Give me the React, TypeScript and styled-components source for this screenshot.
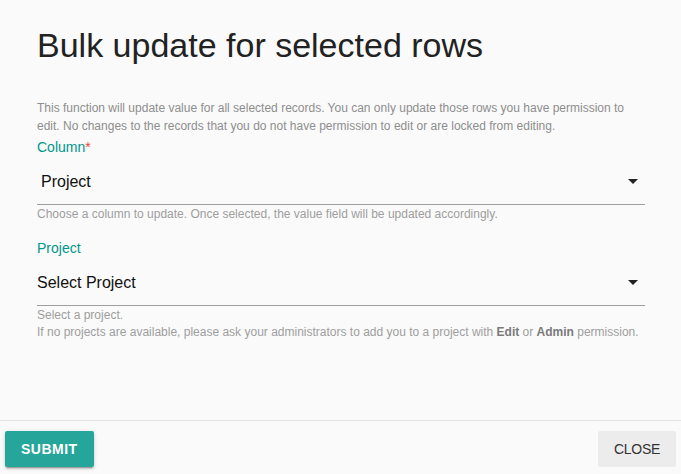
import * as React from 'react'
import styled, { createGlobalStyle } from 'styled-components'

const GlobalStyle = createGlobalStyle`
    html, body {
        margin: 0;
        padding: 0;
        background: #fafafa;
    }
    body {
        font-family: "Liberation Sans", Arial, Helvetica, sans-serif;
        color: #212121;
    }
    *, *::before, *::after {
        box-sizing: border-box;
    }
`;

const Modal = styled.div`
    width: 681px;
    height: 474px;
    display: flex;
    flex-direction: column;
    background: #fafafa;
`;

const Content = styled.div`
    flex: 1;
    padding: 25px 36px 0 37px;
`;

const Title = styled.h4`
    margin: 0 0 34px;
    font-size: 34px;
    line-height: 40px;
    font-weight: 400;
    color: #222;
`;

const Description = styled.p`
    margin: 0 0 3px;
    font-size: 12px;
    line-height: 18px;
    color: #8e8e8e;
`;

const Label = styled.div`
    font-size: 14px;
    line-height: 19px;
    color: #00968a;
`;

const Required = styled.span`
    color: #f44336;
`;

const Select = styled.div<{ $indent?: number }>`
    height: 48px;
    display: flex;
    align-items: center;
    justify-content: space-between;
    padding: 2px 7px 0 ${p => p.$indent || 0}px;
    border-bottom: 1px solid #9e9e9e;
    font-size: 16px;
    color: #111;
    cursor: pointer;
`;

const Helper = styled.div`
    margin-top: 1px;
    font-size: 12px;
    line-height: 17px;
    color: #9e9e9e;

    b {
        color: #7a7a7a;
    }
`;

const Field = styled.div<{ $gap?: number }>`
    margin-top: ${p => p.$gap || 0}px;
`;

const Footer = styled.div`
    height: 54px;
    border-top: 1px solid #e2e2e2;
    padding: 10px 5px 0;
    display: flex;
    justify-content: space-between;
    align-items: flex-start;
`;

const Button = styled.button<{ $primary?: boolean }>`
    height: 36px;
    padding: 0 16px;
    border: none;
    border-radius: 2px;
    font-family: inherit;
    font-size: 14px;
    text-transform: uppercase;
    cursor: pointer;
    background: ${p => p.$primary ? '#26a69a' : '#ececec'};
    color: ${p => p.$primary ? '#fff' : '#333'};
    font-weight: ${p => p.$primary ? 700 : 400};
    letter-spacing: ${p => p.$primary ? '0.5px' : '-0.3px'};
    box-shadow: ${p => p.$primary
        ? '0 2px 2px 0 rgba(0,0,0,0.14), 0 1px 5px 0 rgba(0,0,0,0.12), 0 3px 1px -2px rgba(0,0,0,0.2)'
        : 'none'};
`;

const Caret = () => (
    <svg width="10" height="5" viewBox="0 0 10 5">
        <path d="M0 0 L10 0 L5 5 Z" fill="#222" />
    </svg>
)

const App: React.FC = () => {
    return (
        <>
            <GlobalStyle />
            <Modal>
                <Content>
                    <Title>Bulk update for selected rows</Title>
                    <Description>
                        This function will update value for all selected records. You can only update those rows you have permission to edit. No changes to the records that you do not have permission to edit or are locked from editing.
                    </Description>
                    <Field>
                        <Label>Column<Required>*</Required></Label>
                        <Select $indent={4}>
                            <span>Project</span>
                            <Caret />
                        </Select>
                        <Helper>Choose a column to update. Once selected, the value field will be updated accordingly.</Helper>
                    </Field>
                    <Field $gap={16}>
                        <Label>Project</Label>
                        <Select>
                            <span>Select Project</span>
                            <Caret />
                        </Select>
                        <Helper>
                            Select a project.<br />
                            If no projects are available, please ask your administrators to add you to a project with <b>Edit</b> or <b>Admin</b> permission.
                        </Helper>
                    </Field>
                </Content>
                <Footer>
                    <Button $primary>Submit</Button>
                    <Button>Close</Button>
                </Footer>
            </Modal>
        </>
    )
}

export default App;
